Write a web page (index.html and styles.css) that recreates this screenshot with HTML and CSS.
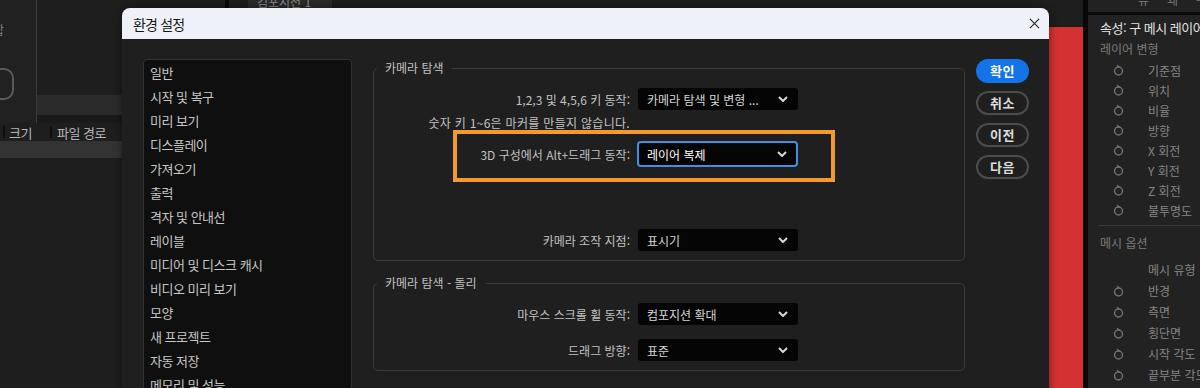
FILE: index.html
```html
<!DOCTYPE html>
<html lang="ko">
<head>
<meta charset="utf-8">
<title>환경 설정</title>
<link rel="stylesheet" href="styles.css">
</head>
<body>
<div class="app">
  <aside class="project">
    <div class="proj-top">
      <div class="info">
        <span class="info-text">합</span>
        <span class="info-btn"></span>
      </div>
      <div class="proj-top-rest">
        <div class="band"></div>
        <div class="band-edge"></div>
      </div>
    </div>
    <div class="proj-head">
      <span class="sep"></span><span class="col-size">크기</span>
      <span class="sep"></span><span class="col-path">파일 경로</span>
    </div>
    <div class="proj-row"></div>
  </aside>
  <div class="splitter"></div>
  <main class="center">
    <div class="tabs"><span class="tab">컴포지션 1</span></div>
    <div class="viewer"></div>
  </main>
  <div class="splitter splitter-r"></div>
  <aside class="props">
    <div class="props-top"><span>뉴</span><span>왜</span><span>ᅮ</span></div>
    <div class="props-title">속성: 구 메시 레이어</div>
    <div class="group">레이어 변형</div>
    <div class="prop"><svg class="sw" viewBox="0 0 11 12"><circle cx="5.5" cy="7" r="4"/><path d="M4 1.2 L6.2 3"/></svg><span>기준점</span></div>
    <div class="prop"><svg class="sw" viewBox="0 0 11 12"><circle cx="5.5" cy="7" r="4"/><path d="M4 1.2 L6.2 3"/></svg><span>위치</span></div>
    <div class="prop"><svg class="sw" viewBox="0 0 11 12"><circle cx="5.5" cy="7" r="4"/><path d="M4 1.2 L6.2 3"/></svg><span>비율</span></div>
    <div class="prop"><svg class="sw" viewBox="0 0 11 12"><circle cx="5.5" cy="7" r="4"/><path d="M4 1.2 L6.2 3"/></svg><span>방향</span></div>
    <div class="prop"><svg class="sw" viewBox="0 0 11 12"><circle cx="5.5" cy="7" r="4"/><path d="M4 1.2 L6.2 3"/></svg><span>X 회전</span></div>
    <div class="prop"><svg class="sw" viewBox="0 0 11 12"><circle cx="5.5" cy="7" r="4"/><path d="M4 1.2 L6.2 3"/></svg><span>Y 회전</span></div>
    <div class="prop"><svg class="sw" viewBox="0 0 11 12"><circle cx="5.5" cy="7" r="4"/><path d="M4 1.2 L6.2 3"/></svg><span>Z 회전</span></div>
    <div class="prop"><svg class="sw" viewBox="0 0 11 12"><circle cx="5.5" cy="7" r="4"/><path d="M4 1.2 L6.2 3"/></svg><span>불투명도</span></div>
    <div class="props-sep"></div>
    <div class="group group-2">메시 옵션</div>
    <div class="prop prop-m first"><span class="sw-gap"></span><span>메시 유형</span></div>
    <div class="prop prop-m"><svg class="sw" viewBox="0 0 11 12"><circle cx="5.5" cy="7" r="4"/><path d="M4 1.2 L6.2 3"/></svg><span>반경</span></div>
    <div class="prop prop-m"><svg class="sw" viewBox="0 0 11 12"><circle cx="5.5" cy="7" r="4"/><path d="M4 1.2 L6.2 3"/></svg><span>측면</span></div>
    <div class="prop prop-m"><svg class="sw" viewBox="0 0 11 12"><circle cx="5.5" cy="7" r="4"/><path d="M4 1.2 L6.2 3"/></svg><span>횡단면</span></div>
    <div class="prop prop-m"><svg class="sw" viewBox="0 0 11 12"><circle cx="5.5" cy="7" r="4"/><path d="M4 1.2 L6.2 3"/></svg><span>시작 각도</span></div>
    <div class="prop prop-m"><svg class="sw" viewBox="0 0 11 12"><circle cx="5.5" cy="7" r="4"/><path d="M4 1.2 L6.2 3"/></svg><span>끝부분 각도</span></div>
    <div class="prop prop-m"><svg class="sw" viewBox="0 0 11 12"><circle cx="5.5" cy="7" r="4"/><path d="M4 1.2 L6.2 3"/></svg><span></span></div>
  </aside>
</div>

<div class="dialog">
  <div class="titlebar">
    <span class="title">환경 설정</span>
    <svg class="close" viewBox="0 0 12 12"><path d="M1 1 L11 11 M11 1 L1 11"/></svg>
  </div>
  <div class="dbody">
    <ul class="cats">
      <li>일반</li>
      <li>시작 및 복구</li>
      <li>미리 보기</li>
      <li>디스플레이</li>
      <li>가져오기</li>
      <li>출력</li>
      <li>격자 및 안내선</li>
      <li>레이블</li>
      <li>미디어 및 디스크 캐시</li>
      <li>비디오 미리 보기</li>
      <li>모양</li>
      <li>새 프로젝트</li>
      <li>자동 저장</li>
      <li>메모리 및 성능</li>
    </ul>
    <div class="panel">
      <fieldset class="fs fs-1">
        <legend>카메라 탐색</legend>
        <div class="row">
          <span class="label">1,2,3 및 4,5,6 키 동작:</span>
          <div class="select"><span>카메라 탐색 및 변형 ...</span><svg class="chev" viewBox="0 0 10 6"><path d="M1 1 L5 5 L9 1"/></svg></div>
        </div>
        <div class="note">숫자 키 1~6은 마커를 만들지 않습니다.</div>
        <div class="row row-alt">
          <span class="label">3D 구성에서 Alt+드래그 동작:</span>
          <div class="select select-focus"><span>레이어 복제</span><svg class="chev" viewBox="0 0 10 6"><path d="M1 1 L5 5 L9 1"/></svg></div>
          <div class="highlight"></div>
        </div>
        <div class="row row-cam">
          <span class="label">카메라 조작 지점:</span>
          <div class="select"><span>표시기</span><svg class="chev" viewBox="0 0 10 6"><path d="M1 1 L5 5 L9 1"/></svg></div>
        </div>
      </fieldset>
      <fieldset class="fs fs-2">
        <legend>카메라 탐색 - 돌리</legend>
        <div class="row">
          <span class="label">마우스 스크롤 휠 동작:</span>
          <div class="select"><span>컴포지션 확대</span><svg class="chev" viewBox="0 0 10 6"><path d="M1 1 L5 5 L9 1"/></svg></div>
        </div>
        <div class="row row-drag">
          <span class="label">드래그 방향:</span>
          <div class="select"><span>표준</span><svg class="chev" viewBox="0 0 10 6"><path d="M1 1 L5 5 L9 1"/></svg></div>
        </div>
      </fieldset>
    </div>
    <div class="buttons">
      <button class="btn btn-primary">확인</button>
      <button class="btn">취소</button>
      <button class="btn">이전</button>
      <button class="btn">다음</button>
    </div>
  </div>
</div>
</body>
</html>
```

FILE: styles.css
```css
* { box-sizing: border-box; }

html, body {
  margin: 0;
  padding: 0;
}

body {
  width: 1200px;
  height: 388px;
  overflow: hidden;
  position: relative;
  background: #1e1e1e;
  font-family: "Noto Sans CJK KR", "Noto Sans", sans-serif;
  color: #c8c8c8;
}

/* ---------- background app ---------- */
.app {
  display: flex;
  height: 388px;
}

.project {
  width: 225px;
  flex: none;
  display: flex;
  flex-direction: column;
  background: #1e1e1e;
}

.proj-top {
  height: 123px;
  display: flex;
}

.info {
  width: 37px;
  border-right: 1px solid #3c3c3c;
  background: #212121;
  display: flex;
  flex-direction: column;
  overflow: hidden;
}

.info-text {
  font-size: 12px;
  line-height: 14px;
  color: #7d7d7d;
  margin: 23px 0 0 -7px;
}

.info-btn {
  width: 30px;
  height: 32px;
  margin: 31px 0 0 -16px;
  border: 2px solid #5a5a5a;
  border-radius: 10px;
}

.proj-top-rest {
  flex: 1;
  display: flex;
  flex-direction: column;
  justify-content: flex-end;
}

.band {
  height: 20px;
  background: #2b2b2b;
}

.band-edge {
  height: 8px;
  background: #1a1a1a;
}

.proj-head {
  height: 18px;
  display: flex;
  align-items: center;
  font-size: 13px;
  color: #b4b4b4;
  letter-spacing: -0.5px;
}

.sep {
  width: 2px;
  height: 12px;
  background: #0e0e0e;
}

.proj-head .sep:first-child { margin-left: 3px; }
.col-size { margin-left: 4px; width: 41px; }
.col-path { margin-left: 5px; }

.proj-row {
  height: 17px;
  background: #333333;
}

.splitter {
  width: 4px;
  flex: none;
  background: #080808;
}

.splitter-r { width: 5px; }

.center {
  flex: 1;
  display: flex;
  flex-direction: column;
}

.tabs {
  height: 27px;
  background: #1e1e1e;
  overflow: hidden;
}

.tab {
  display: inline-block;
  margin-left: 19px;
  width: 84px;
  height: 26px;
  padding-left: 9px;
  margin-top: -4px;
  background: #2b2b2b;
  font-size: 12px;
  line-height: 12px;
  color: #8a8a8a;
  vertical-align: top;
}

.viewer {
  flex: 1;
  background: #d43232;
}

.props {
  width: 112px;
  flex: none;
  background: #222222;
  overflow: hidden;
  white-space: nowrap;
  font-size: 12px;
}

.props-top {
  height: 15px;
  border-bottom: 3px solid #0b0b0b;
  overflow: hidden;
  display: flex;
  gap: 18px;
  padding-left: 50px;
  color: #7a7a7a;
  line-height: 10px;
}

.props-top span { margin-top: -5px; }

.props-title {
  margin-top: 3px;
  padding-left: 12px;
  font-size: 13px;
  line-height: 20px;
  color: #e2e2e2;
  letter-spacing: -0.5px;
}

.group {
  padding-left: 12px;
  line-height: 22px;
  color: #7c7c7c;
  font-size: 12px;
}

.prop {
  height: 20px;
  display: flex;
  align-items: center;
  padding-left: 25px;
  color: #858585;
  gap: 24px;
}

.prop-m { height: 21px; }
.prop-m.first { margin-top: 5px; }

.sw {
  width: 11px;
  height: 12px;
  flex: none;
  fill: none;
  stroke: #727272;
  stroke-width: 1.4;
}

.sw-gap { width: 11px; flex: none; }

.props-sep {
  height: 1px;
  margin: 5px 0 0 10px;
  background: #3a3a3a;
}

.group-2 { margin-top: 6px; }

/* ---------- dialog ---------- */
.dialog {
  position: absolute;
  left: 122px;
  top: 8px;
  width: 927px;
  height: 392px;
  display: flex;
  flex-direction: column;
  border-radius: 8px 8px 0 0;
  overflow: hidden;
  background: #1f1f1f;
  box-shadow: 0 0 10px rgba(0, 0, 0, 0.45);
}

.titlebar {
  height: 31px;
  flex: none;
  display: flex;
  align-items: center;
  justify-content: space-between;
  padding: 0 9px 0 11px;
  background: #eef2f8;
}

.title {
  font-size: 14px;
  color: #151515;
  letter-spacing: -0.8px;
}

.close {
  width: 11px;
  height: 11px;
  fill: none;
  stroke: #222;
  stroke-width: 1.2;
}

.dbody {
  flex: 1;
  display: flex;
  align-items: flex-start;
  padding: 20px 20px 0 21px;
  border-left: 1px solid #3a3a3a;
  margin-left: -1px;
}

.cats {
  list-style: none;
  margin: 0;
  padding: 1px 0 0;
  width: 209px;
  height: 360px;
  flex: none;
  background: #0f0f0f;
  border: 1px solid #333333;
  border-radius: 4px;
}

.cats li {
  padding-left: 6px;
  font-size: 13px;
  line-height: 24px;
  color: #c6c6c6;
  letter-spacing: -0.5px;
  white-space: nowrap;
}

.panel {
  width: 592px;
  flex: none;
  margin-left: 21px;
  display: flex;
  flex-direction: column;
}

.fs {
  margin: 0;
  padding: 11px 0 9px;
  border: 1px solid #3a3a3a;
  border-radius: 5px;
  min-inline-size: 0;
}

.fs-2 { margin-top: 13px; }

.fs legend {
  margin-left: 3px;
  padding: 0 8px;
  font-size: 12px;
  line-height: 18px;
  color: #c2c2c2;
  letter-spacing: 0;
}

.row {
  display: flex;
  align-items: center;
  position: relative;
}

.label, .note {
  width: 256px;
  flex: none;
  text-align: right;
  font-size: 12px;
  color: #c2c2c2;
  letter-spacing: 0;
  white-space: nowrap;
}

.note {
  margin-top: 5px;
  line-height: 16px;
  letter-spacing: 0.3px;
}

.row-alt { margin-top: 10px; }
.row-cam { margin-top: 62px; }
.row-drag { margin-top: 14px; }

.select {
  width: 160px;
  height: 22px;
  margin-left: 8px;
  display: flex;
  align-items: center;
  justify-content: space-between;
  padding: 0 10px 0 9px;
  background: #050505;
  border-radius: 3px;
  font-size: 12px;
  color: #d6d6d6;
  letter-spacing: 0;
  white-space: nowrap;
}

.select-focus {
  width: 161px;
  height: 26px;
  margin-left: 7px;
  border: 2px solid #3f8fe8;
  border-radius: 4px;
  padding: 0 9px 0 8px;
  color: #ffffff;
}

.chev {
  width: 10px;
  height: 6px;
  flex: none;
  fill: none;
  stroke: #d8d8d8;
  stroke-width: 2;
}

.highlight {
  position: absolute;
  left: 79px;
  top: -11px;
  width: 382px;
  height: 52px;
  border: 4px solid #f29a2e;
  pointer-events: none;
}

.buttons {
  width: 53px;
  flex: none;
  margin-left: 11px;
  display: flex;
  flex-direction: column;
  gap: 8px;
}

.btn {
  height: 24px;
  padding: 0;
  border: 2px solid #4c4c4c;
  border-radius: 12px;
  background: transparent;
  font-family: inherit;
  font-size: 13px;
  font-weight: 700;
  color: #dcdcdc;
  line-height: 18px;
  letter-spacing: 0.5px;
}

.btn-primary {
  background: #1473e6;
  border-color: #1473e6;
  color: #ffffff;
}
```
